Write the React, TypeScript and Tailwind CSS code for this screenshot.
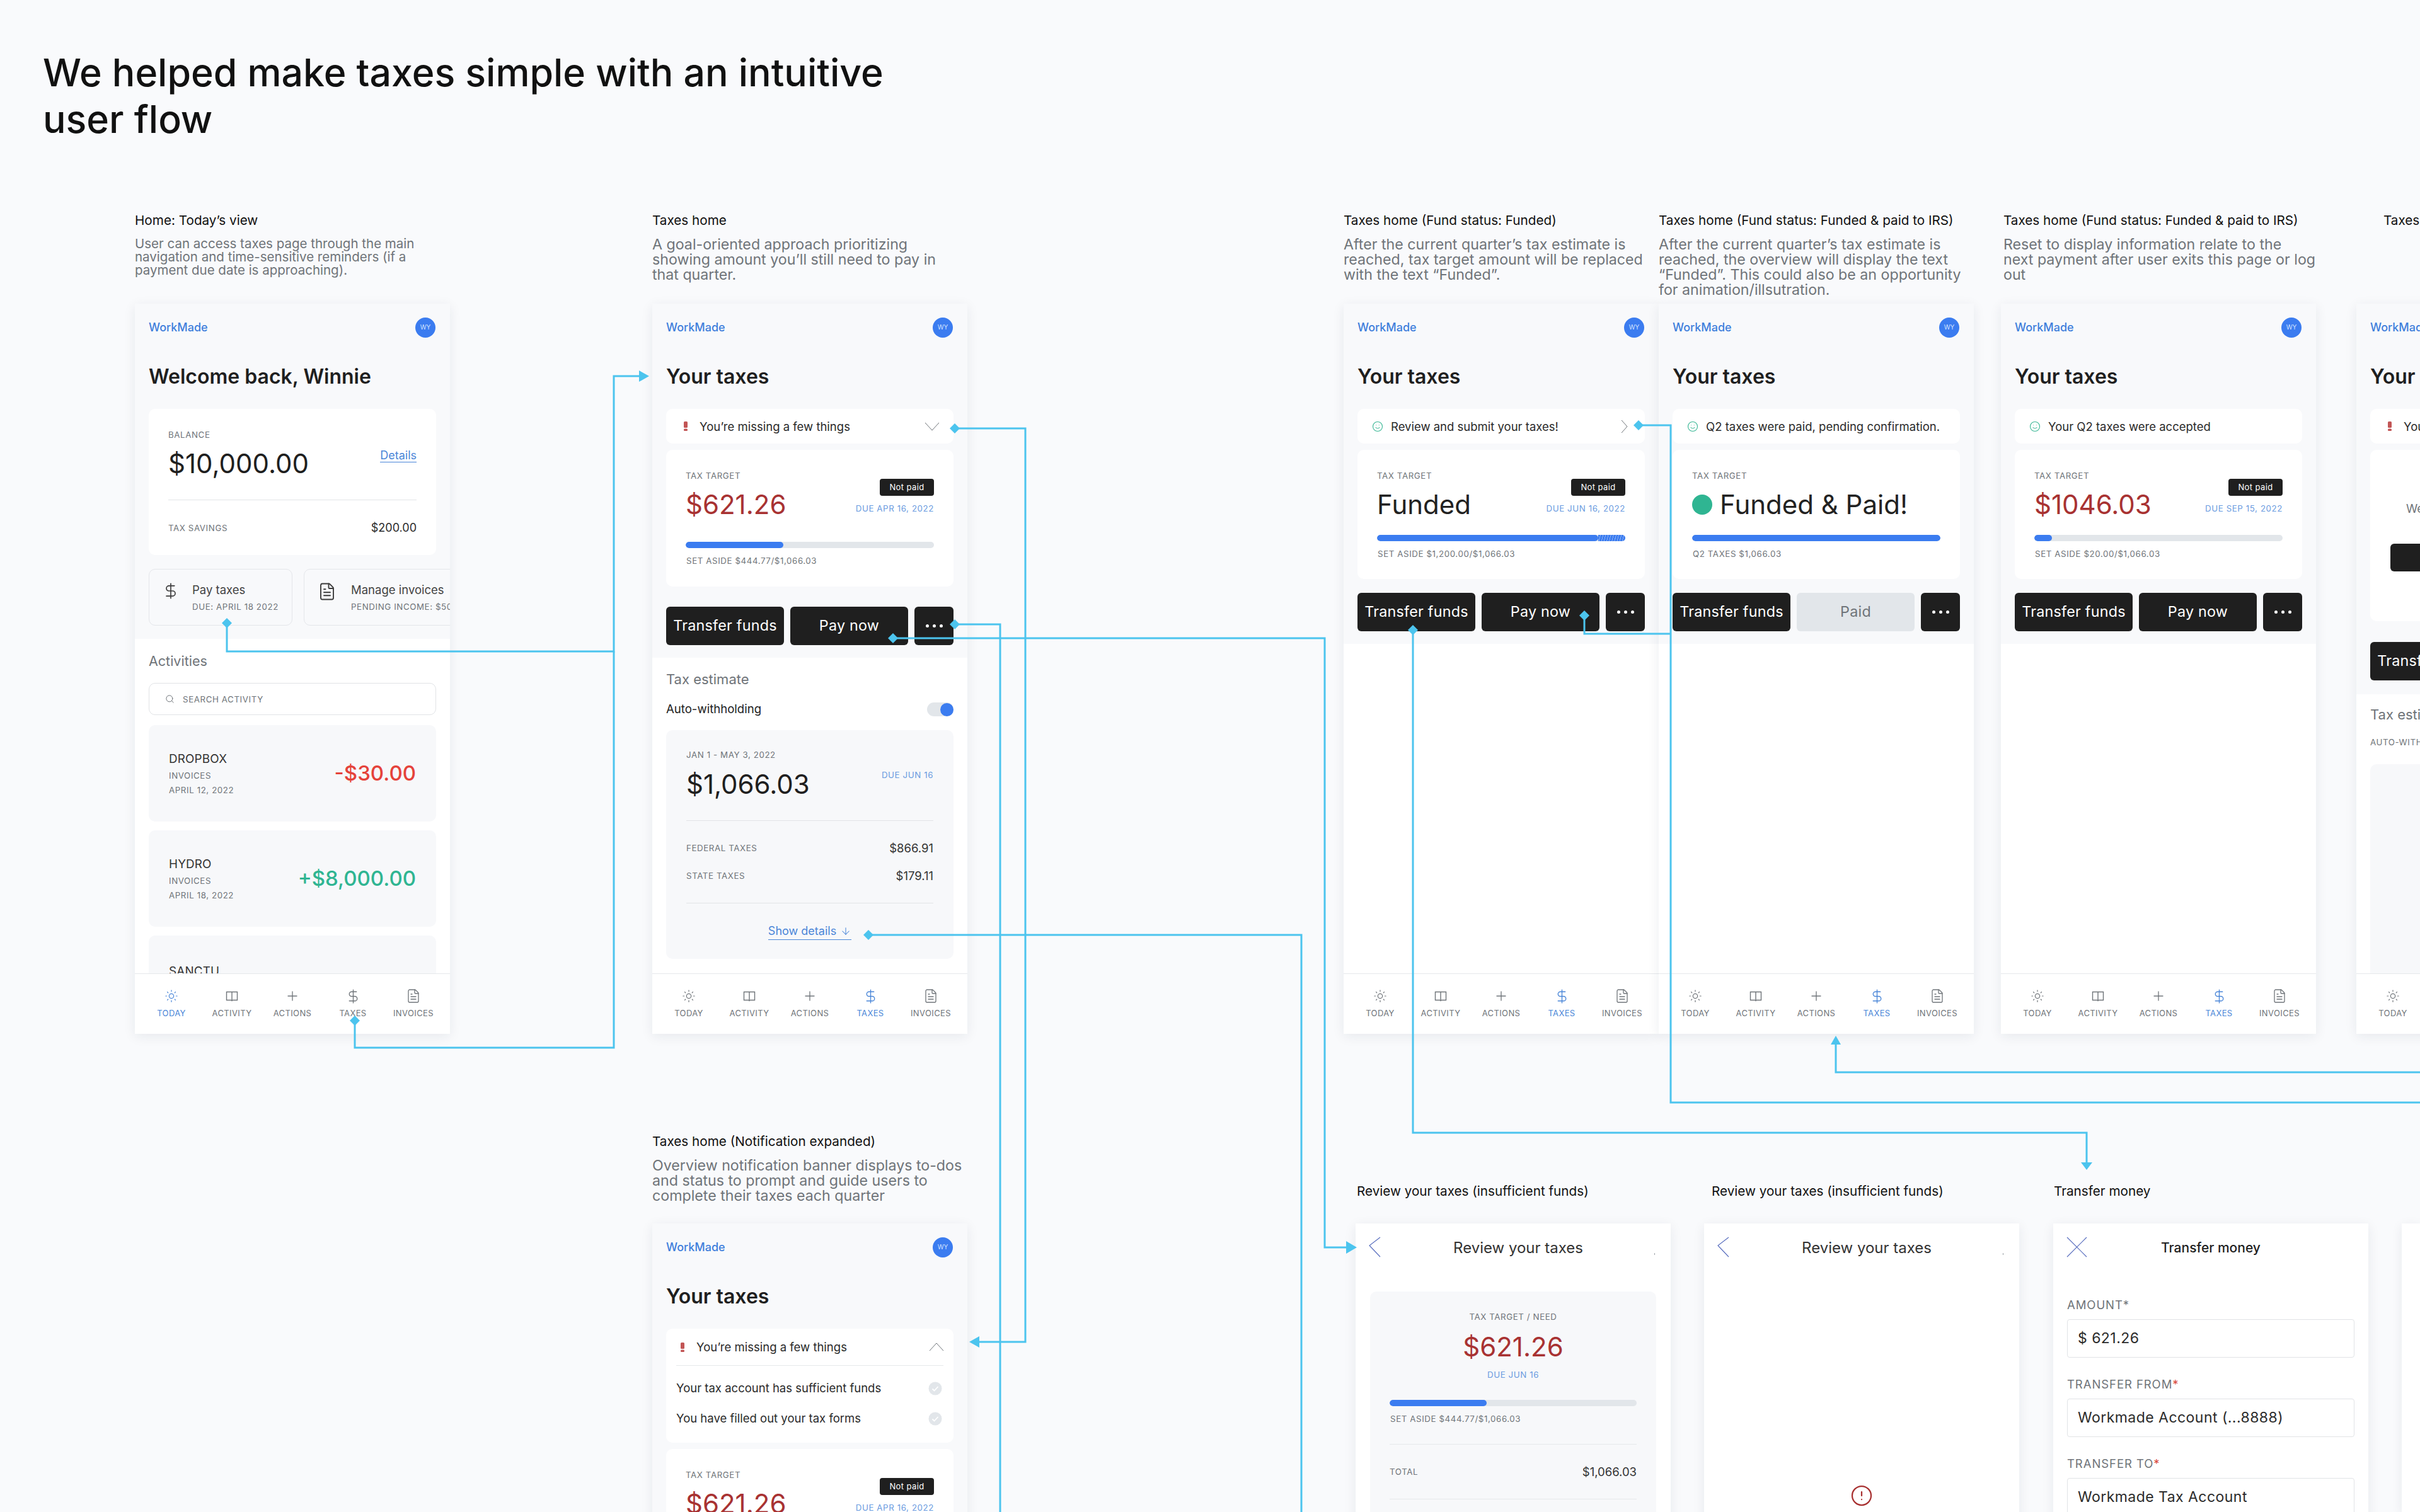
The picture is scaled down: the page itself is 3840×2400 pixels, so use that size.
import React from "react";
import { Sun, Plus, DollarSign, FileText, Search, Smile, AlertCircle, ArrowDown } from "lucide-react";

function BookIcon({ className }: { className?: string }) {
  return (
    <svg viewBox="0 0 24 24" width="24" height="24" fill="none" stroke="currentColor" strokeWidth="1.4" className={className}>
      <path d="M3.5 5.5h17v13h-7.5l-1 1-1-1H3.5z" />
      <path d="M12 5.5v13" />
    </svg>
  );
}

const NAV = ["TODAY", "ACTIVITY", "ACTIONS", "TAXES", "INVOICES"];

function Nav({ active }: { active: string }) {
  return (
    <div className="flex h-[96px] shrink-0 border-t border-[#e6e8eb] bg-white px-[10px] pt-[22px]">
      {NAV.map((n) => {
        const on = n === active;
        const tone = on ? "text-[#4a86d8]" : "text-[#6f7479]";
        return (
          <div key={n} className={`flex w-[96px] flex-col items-center ${tone}`}>
            <div className="flex h-[26px] items-center justify-center">
              {n === "TODAY" && <Sun size={22} strokeWidth={1.3} />}
              {n === "ACTIVITY" && <BookIcon />}
              {n === "ACTIONS" && <Plus size={24} strokeWidth={1.3} />}
              {n === "TAXES" && <DollarSign size={25} strokeWidth={1.3} />}
              {n === "INVOICES" && <FileText size={24} strokeWidth={1.3} />}
            </div>
            <div className="mt-[6px] text-[13px] leading-[16px] tracking-[0.03em]">{n}</div>
          </div>
        );
      })}
    </div>
  );
}

function Phone({ children, className = "" }: { children: React.ReactNode; className?: string }) {
  return (
    <div className={`flex h-[1159px] w-[500px] shrink-0 flex-col overflow-hidden shadow-[0_4px_18px_rgba(30,40,60,0.08)] ${className}`}>
      {children}
    </div>
  );
}

function Header({ title }: { title: string }) {
  return (
    <>
      <div className="flex items-center justify-between pr-[1px] pt-[21px]">
        <div className="pt-[1px] text-[18px] font-medium leading-[32px] text-[#3f7fdc]">WorkMade</div>
        <div className="flex h-[32px] w-[32px] items-center justify-center rounded-full bg-[#3b7cf0] text-[10px] text-[#cfe0ff]">WY</div>
      </div>
      <h2 className="mt-[42px] text-[32px] font-semibold leading-[40px] text-[#1f1f1f]">{title}</h2>
    </>
  );
}

function Caps({ children, className = "", blue }: { children: React.ReactNode; className?: string; blue?: boolean }) {
  return <div className={`text-[13.3px] leading-[16px] tracking-[0.045em] ${blue ? "text-[#6a9be0]" : "text-[#6f7479]"} ${className}`}>{children}</div>;
}

function Bang() {
  return (
    <svg width="6" height="15" viewBox="0 0 6 15" fill="#c25555">
      <rect x="0" y="0" width="6" height="10" rx="1.5" />
      <rect x="0" y="11.5" width="6" height="3.5" rx="1.5" />
    </svg>
  );
}

function Chevron({ dir, className = "" }: { dir: "down" | "up" | "right"; className?: string }) {
  if (dir === "right")
    return (
      <svg width="11" height="22" viewBox="0 0 11 22" fill="none" stroke="#6f7479" strokeWidth="1" className={className}>
        <path d="M1 1l9 10-9 10" />
      </svg>
    );
  return (
    <svg width="24" height="14" viewBox="0 0 24 14" fill="none" stroke="#6f7479" strokeWidth="1" className={className}>
      <path d={dir === "down" ? "M1 1l11 12L23 1" : "M1 13L12 1l11 12"} />
    </svg>
  );
}

function Banner({ icon, text, chevron }: { icon: "bang" | "smile"; text: string; chevron?: "down" | "right" }) {
  return (
    <div className="flex h-[55px] items-center rounded-[10px] bg-white pr-[22px]">
      <div className="flex w-[53px] items-center pl-[23px]">
        {icon === "bang" ? (
          <div className="pl-[5px]"><Bang /></div>
        ) : (
          <Smile size={18} strokeWidth={1.5} className="text-[#3ab795]" />
        )}
      </div>
      <div className="flex-1 whitespace-nowrap text-[18.5px] leading-[24px] text-[#2b2b2b]">{text}</div>
      {chevron === "down" && <Chevron dir="down" />}
      {chevron === "right" && <Chevron dir="right" className="mr-[5px]" />}
    </div>
  );
}

function Progress({ pct, stripe, label, className = "" }: { pct: number; stripe?: boolean; label: string; className?: string }) {
  return (
    <div className={className}>
      <div className="flex h-[10px] overflow-hidden rounded-full bg-[#e2e6ea]">
        <div className="h-full rounded-full bg-[#3b7cf0]" style={{ width: `${pct}%` }} />
        {stripe && (
          <div className="h-full flex-1 bg-[repeating-linear-gradient(105deg,#3b7cf0_0,#3b7cf0_3px,#86aef4_3px,#86aef4_4px)]" />
        )}
      </div>
      <Caps className="mt-[12px] pl-[1px]">{label}</Caps>
    </div>
  );
}

function Target({
  amount,
  amountClass = "text-[#a83232]",
  dot,
  badge = true,
  due,
  pct,
  stripe,
  note,
  compact,
}: {
  amount: string;
  amountClass?: string;
  dot?: boolean;
  badge?: boolean;
  due?: string;
  pct: number;
  stripe?: boolean;
  note: string;
  compact?: boolean;
}) {
  return (
    <div className={`mt-[10px] rounded-[10px] bg-white px-[31px] pt-[33px] ${compact ? "pb-[32px]" : "pb-[33px]"}`}>
      <div className="flex items-start justify-between">
        <div>
          <Caps>TAX TARGET</Caps>
          <div className={`mt-[13px] flex items-center text-[42px] leading-[50px] ${amountClass}`}>
            {dot && <span className="mr-[12px] h-[32px] w-[32px] rounded-full bg-[#2fb592]" />}
            {amount}
          </div>
        </div>
        {badge && (
          <div className="flex flex-col items-end pt-[13px]">
            <div className="flex h-[27px] w-[86px] items-center justify-center rounded-[4px] bg-[#1f1f1f] text-[13px] tracking-[0.03em] text-white">Not paid</div>
            <Caps blue className="mt-[12px]">{due}</Caps>
          </div>
        )}
      </div>
      <Progress pct={pct} stripe={stripe} label={note} className={compact ? "mt-[23px]" : "mt-[34px]"} />
    </div>
  );
}

function Buttons({ paid, compact }: { paid?: boolean; compact?: boolean }) {
  const dark = "flex h-[61px] items-center justify-center rounded-[6px] bg-[#1f1f1f] text-[23.3px] tracking-[0.01em] text-white";
  return (
    <div className={`flex gap-[10px] ${compact ? "mt-[22px]" : "mt-[32px]"}`}>
      <div className={`${dark} w-[187px]`}>Transfer funds</div>
      <div className={`flex h-[61px] w-[187px] items-center justify-center rounded-[6px] text-[23.3px] tracking-[0.01em] ${paid ? "bg-[#e2e6ea] text-[#6f7479]" : "bg-[#1f1f1f] text-white"}`}>
        {paid ? "Paid" : "Pay now"}
      </div>
      <div className={`${dark} flex-1 gap-[6px]`}>
        <span className="h-[5px] w-[5px] rounded-full bg-white" />
        <span className="h-[5px] w-[5px] rounded-full bg-white" />
        <span className="h-[5px] w-[5px] rounded-full bg-white" />
      </div>
    </div>
  );
}

function Label({ title, lines, h, tight, x }: { title: string; lines?: string[]; h: string; tight?: boolean; x?: string }) {
  return (
    <div className={`${h} ${x ?? ""} shrink-0`}>
      <div className="whitespace-nowrap text-[20.7px] leading-[24px] text-[#111]">{title}</div>
      {lines && (
        <div className={`mt-[14px] whitespace-nowrap text-[#6f7479] ${tight ? "text-[20.5px] leading-[21px]" : "text-[23.2px] leading-[24px]"}`}>
          {lines.map((l) => (
            <div key={l}>{l}</div>
          ))}
        </div>
      )}
    </div>
  );
}

function Activity({ name, date, amount, tone, shift }: { name: string; date: string; amount: string; tone: string; shift?: boolean }) {
  return (
    <div className={`flex h-[153px] shrink-0 items-center justify-between rounded-[10px] bg-[#f7f8fa] px-[32px] ${shift ? "pt-[6px]" : ""}`}>
      <div>
        <div className="text-[18.8px] leading-[24px] tracking-[0.01em] text-[#333]">{name}</div>
        <Caps className="mt-[6px]">INVOICES</Caps>
        <Caps className="mt-[7px]">{date}</Caps>
      </div>
      <div className={`text-[33px] font-medium ${tone}`}>{amount}</div>
    </div>
  );
}

function HomeScreen() {
  return (
    <Phone>
      <div className="bg-[#f8f9fb] px-[22px] pb-[21px]">
        <Header title="Welcome back, Winnie" />
        <div className="mt-[31px] rounded-[10px] bg-white px-[31px] pb-[31px] pt-[33px]">
          <Caps>BALANCE</Caps>
          <div className="mt-[13px] flex items-start justify-between">
            <div className="text-[42px] leading-[50px] text-[#1f1f1f]">$10,000.00</div>
            <div className="mt-[1px] border-b border-[#4a86d8] text-[18px] leading-[21px] text-[#4a86d8]">Details</div>
          </div>
          <div className="mt-[32px] h-[1px] bg-[#e2e4e7]" />
          <div className="mt-[32px] flex items-center justify-between">
            <Caps>TAX SAVINGS</Caps>
            <div className="text-[18px] leading-[24px] text-[#2b2b2b]">$200.00</div>
          </div>
        </div>
        <div className="mt-[22px] flex gap-[18px]">
          <div className="flex h-[90px] w-[228px] shrink-0 rounded-[10px] border border-[#e4e6ea] pt-[20px]">
            <div className="w-[68px] pl-[20px]"><DollarSign size={28} strokeWidth={1.4} className="text-[#3a3a3a]" /></div>
            <div>
              <div className="text-[18.5px] leading-[24px] text-[#444]">Pay taxes</div>
              <Caps className="mt-[7px] whitespace-nowrap">DUE: APRIL 18 2022</Caps>
            </div>
          </div>
          <div className="flex h-[90px] w-[300px] shrink-0 rounded-[10px] border border-[#e4e6ea] pt-[20px]">
            <div className="w-[74px] pl-[21px]"><FileText size={30} strokeWidth={1.5} className="text-[#3a3a3a]" /></div>
            <div>
              <div className="whitespace-nowrap text-[18.5px] leading-[24px] text-[#444]">Manage invoices</div>
              <Caps className="mt-[7px] whitespace-nowrap">PENDING INCOME: $500.00</Caps>
            </div>
          </div>
        </div>
      </div>
      <div className="min-h-0 flex-1 overflow-hidden bg-white px-[22px] pt-[21px]">
        <div className="text-[21.5px] leading-[28px] text-[#6f7479]">Activities</div>
        <div className="mt-[21px] flex h-[51px] items-center rounded-[10px] border border-[#e1e3e6] pl-[25px]">
          <Search size={15} strokeWidth={1.6} className="text-[#6f7479]" />
          <Caps className="ml-[13px]">SEARCH ACTIVITY</Caps>
        </div>
        <div className="mt-[16px] flex flex-col gap-[14px]">
          <Activity name="DROPBOX" date="APRIL 12, 2022" amount="-$30.00" tone="text-[#e5423a]" />
          <Activity name="HYDRO" date="APRIL 18, 2022" amount="+$8,000.00" tone="text-[#2fb592]" />
          <Activity shift name="SANCTU" date="APRIL 18, 2022" amount="" tone="" />
        </div>
      </div>
      <Nav active="TODAY" />
    </Phone>
  );
}

function Estimate() {
  return (
    <div className="mt-[21px] h-[363px] rounded-[10px] bg-[#f7f8fa] px-[32px] pt-[31px]">
      <Caps>JAN 1 - MAY 3, 2022</Caps>
      <div className="mt-[14px] flex items-start justify-between">
        <div className="text-[42px] leading-[50px] text-[#1f1f1f]">$1,066.03</div>
        <Caps blue className="mt-[2px]">DUE JUN 16</Caps>
      </div>
      <div className="mt-[32px] h-[1px] bg-[#e2e4e7]" />
      <div className="mt-[31px] flex items-center justify-between">
        <Caps>FEDERAL TAXES</Caps>
        <div className="text-[18.5px] leading-[24px] text-[#333]">$866.91</div>
      </div>
      <div className="mt-[20px] flex items-center justify-between">
        <Caps>STATE TAXES</Caps>
        <div className="text-[18.5px] leading-[24px] text-[#333]">$179.11</div>
      </div>
      <div className="mt-[31px] h-[1px] bg-[#e2e4e7]" />
      <div className="mt-[32px] flex justify-center">
        <div className="flex items-center gap-[6px] border-b border-[#4a86d8] pb-[1px] text-[18px] leading-[24px] text-[#4a86d8]">
          Show details <ArrowDown size={18} strokeWidth={1.4} />
        </div>
      </div>
    </div>
  );
}

function TaxesHome() {
  return (
    <Phone>
      <div className="bg-[#f8f9fb] px-[22px] pb-[20px]">
        <Header title="Your taxes" />
        <div className="mt-[31px]">
          <Banner icon="bang" text="You’re missing a few things" chevron="down" />
        </div>
        <Target amount="$621.26" due="DUE APR 16, 2022" pct={39.3} note="SET ASIDE $444.77/$1,066.03" />
        <Buttons />
      </div>
      <div className="min-h-0 flex-1 overflow-hidden bg-white px-[22px] pt-[20px]">
        <div className="text-[22px] leading-[28px] text-[#6f7479]">Tax estimate</div>
        <div className="mt-[22px] flex h-[24px] items-center justify-between">
          <div className="text-[18.6px] text-[#222]">Auto-withholding</div>
          <div className="flex h-[22px] w-[42px] items-center justify-end rounded-full bg-[#e2e6ea]">
            <div className="h-[21px] w-[21px] rounded-full bg-[#3b7cf0]" />
          </div>
        </div>
        <Estimate />
      </div>
      <Nav active="TAXES" />
    </Phone>
  );
}

function Expanded() {
  const Row = ({ t }: { t: string }) => (
    <div className="flex h-[48px] items-center justify-between pl-[16px] pr-[18px]">
      <div className="text-[18.5px] text-[#2b2b2b]">{t}</div>
      <svg width="22" height="22" viewBox="0 0 22 22">
        <circle cx="11" cy="11" r="10.5" fill="#e2e6ea" />
        <path d="M6.5 11.5l3 3 6-6.5" fill="none" stroke="#fff" strokeWidth="1.8" />
      </svg>
    </div>
  );
  return (
    <Phone>
      <div className="bg-[#f8f9fb] px-[22px] pb-[21px]">
        <Header title="Your taxes" />
        <div className="mt-[31px] h-[181px] rounded-[10px] bg-white">
          <div className="flex h-[58px] items-center pl-[23px] pr-[15px]">
            <Bang />
            <div className="ml-[19px] flex-1 text-[18.5px] leading-[24px] text-[#2b2b2b]">You’re missing a few things</div>
            <Chevron dir="up" />
          </div>
          <div className="mx-[16px] h-[1px] bg-[#e6e8eb]" />
          <div className="mt-[12px]">
            <Row t="Your tax account has sufficient funds" />
            <Row t="You have filled out your tax forms" />
          </div>
        </div>
        <Target amount="$621.26" due="DUE APR 16, 2022" pct={39.3} note="SET ASIDE $444.77/$1,066.03" />
      </div>
    </Phone>
  );
}

function FundedShell({ banner, target, paid }: { banner: React.ReactNode; target: React.ReactNode; paid?: boolean }) {
  return (
    <Phone>
      <div className="bg-[#f8f9fb] px-[22px] pb-[20px]">
        <Header title="Your taxes" />
        <div className="mt-[31px]">{banner}</div>
        {target}
        <Buttons paid={paid} compact />
      </div>
      <div className="min-h-0 flex-1 bg-white" />
      <Nav active="TAXES" />
    </Phone>
  );
}

function Sixth() {
  return (
    <Phone>
      <div className="bg-[#f8f9fb] px-[22px] pb-[22px]">
        <Header title="Your taxes" />
        <div className="mt-[31px]">
          <Banner icon="bang" text="You’re missing a few things" chevron="down" />
        </div>
        <div className="mt-[10px] flex h-[272px] flex-col items-start rounded-[10px] bg-white px-[32px] pt-[81px]">
          <div className="ml-[25px] whitespace-nowrap text-[18.5px] leading-[24px] text-[#6f7479]">We need more information from you</div>
          <div className="mt-[44px] h-[44px] w-full rounded-[6px] bg-[#1f1f1f]" />
        </div>
        <div className="mt-[33px]"><div className="flex h-[61px] w-[187px] items-center justify-center rounded-[6px] bg-[#1f1f1f] text-[23.3px] tracking-[0.01em] text-white">Transfer funds</div></div>
      </div>
      <div className="min-h-0 flex-1 overflow-hidden bg-white px-[22px] pt-[18px]">
        <div className="text-[22px] leading-[28px] text-[#6f7479]">Tax estimate</div>
        <Caps className="mt-[22px]">AUTO-WITHHOLDING</Caps>
        <div className="mt-[27px] h-[400px] rounded-[10px] bg-[#f7f8fa]" />
      </div>
      <Nav active="TAXES" />
    </Phone>
  );
}

function ReviewHeader({ title, close }: { title: string; close?: boolean }) {
  return (
    <div className="relative flex h-[76px] shrink-0 items-center justify-center pt-[1px]">
      <div className="absolute left-[21px] top-[21px]">
        {close ? (
          <svg width="33" height="33" viewBox="0 0 33 33" fill="none" stroke="#5a6fbf" strokeWidth="1.2">
            <path d="M1 1l31 31M32 1L1 32" />
          </svg>
        ) : (
          <svg width="19" height="33" viewBox="0 0 19 33" fill="none" stroke="#5a6fbf" strokeWidth="1.2">
            <path d="M18 1L1 14l17 18" />
          </svg>
        )}
      </div>
      <div className={`${close ? "text-[21px] font-medium text-[#1f1f1f]" : "ml-[16px] text-[24px] text-[#333]"} whitespace-nowrap`}>{title}</div>
      {!close && <div className="absolute right-[25px] top-[47px] h-[3px] w-[1px] bg-[#9aa0a6]" />}
    </div>
  );
}

function ReviewA() {
  return (
    <Phone className="bg-white">
      <ReviewHeader title="Review your taxes" />
      <div className="px-[23px] pt-[32px]">
        <div className="h-[700px] rounded-[10px] bg-[#f7f8fa] px-[31px] pt-[32px]">
          <Caps className="text-center">TAX TARGET / NEED</Caps>
          <div className="mt-[15px] text-center text-[42px] leading-[50px] text-[#a83232]">$621.26</div>
          <Caps blue className="mt-[11px] text-center">DUE JUN 16</Caps>
          <div className="mt-[32px]">
            <Progress pct={39.3} label="SET ASIDE $444.77/$1,066.03" />
          </div>
          <div className="mt-[32px] h-[1px] bg-[#e6e8eb]" />
          <div className="mt-[31px] flex items-center justify-between">
            <Caps>TOTAL</Caps>
            <div className="text-[18.5px] leading-[24px] text-[#333]">$1,066.03</div>
          </div>
          <div className="mt-[31px] h-[1px] bg-[#e6e8eb]" />
        </div>
      </div>
    </Phone>
  );
}

function ReviewB() {
  return (
    <Phone className="bg-white">
      <ReviewHeader title="Review your taxes" />
      <div className="flex justify-center pt-[338px]">
        <AlertCircle size={36} strokeWidth={1.5} className="text-[#a83232]" />
      </div>
    </Phone>
  );
}

function Field({ label, star, value }: { label: string; star?: boolean; value: string }) {
  return (
    <div>
      <div className="text-[18.5px] leading-[20px] tracking-[0.05em] text-[#6f7479]">
        {label}
        <span className={star ? "text-[#d9483b]" : ""}>*</span>
      </div>
      <div className="mt-[13px] flex h-[61px] items-center rounded-[4px] border border-[#e1e3e6] pl-[16px] text-[23px] tracking-[0.02em] text-[#2b2b2b]">{value}</div>
    </div>
  );
}

function Transfer() {
  return (
    <Phone className="bg-white">
      <ReviewHeader title="Transfer money" close />
      <div className="flex flex-col gap-[32px] px-[22px] pt-[43px]">
        <Field label="AMOUNT" value="$ 621.26" />
        <Field label="TRANSFER FROM" star value="Workmade Account (...8888)" />
        <Field label="TRANSFER TO" star value="Workmade Tax Account" />
      </div>
    </Phone>
  );
}

const L = "#4cc4ee";

function Wires() {
  const paths = [
    "M360 989V1034H974V597H1020",
    "M974 1034V1663H563V1620",
    "M1515 680H1627V2130H1548",
    "M1515 991H1587V2400",
    "M1417 1013H2102V1980H2140",
    "M1378 1484H2065V2400",
    "M2242 1000V1798H3311V1845",
    "M2514 977V1006H2651",
    "M2600 675H2651V1750H3840",
    "M2913 1656V1702H3840",
  ];
  const diamonds = [
    [360, 989], [563, 1620], [1515, 680], [1515, 991], [1417, 1013], [1378, 1484], [2242, 1000], [2514, 977], [2600, 675],
  ];
  return (
    <svg className="pointer-events-none absolute left-0 top-0" width="3840" height="2400" fill="none">
      {paths.map((d) => (
        <path key={d} d={d} stroke={L} strokeWidth="3" />
      ))}
      {diamonds.map(([x, y]) => (
        <path key={`${x}-${y}`} d={`M${x - 8} ${y}L${x} ${y - 8}L${x + 8} ${y}L${x} ${y + 8}Z`} fill={L} />
      ))}
      <path d="M1014 588L1030 597L1014 606Z" fill={L} />
      <path d="M1554 2121L1538 2130L1554 2139Z" fill={L} />
      <path d="M2136 1970L2153 1980L2136 1990Z" fill={L} />
      <path d="M3302 1845L3311 1857L3320 1845Z" fill={L} />
      <path d="M2905 1658L2913 1644L2921 1658Z" fill={L} />
    </svg>
  );
}

export default function App() {
  return (
    <div className="relative h-[2400px] w-[3840px] overflow-hidden bg-[#f9fafc] font-['Inter',sans-serif]">
      <h1 className="absolute left-[68px] top-[78px] whitespace-nowrap text-[60.8px] font-medium leading-[74px] text-[#111]">
        We helped make taxes simple with an intuitive
        <br />
        user flow
      </h1>

      <div className="absolute left-[214px] top-[338px] flex flex-col">
        <Label h="h-[144px]" tight title="Home: Today’s view" lines={["User can access taxes page through the main", "navigation and time-sensitive reminders (if a", "payment due date is approaching)."]} />
        <HomeScreen />
      </div>

      <div className="absolute left-[1035px] top-[338px] flex flex-col">
        <Label h="h-[144px]" title="Taxes home" lines={["A goal-oriented approach prioritizing", "showing amount you’ll still need to pay in", "that quarter."]} />
        <TaxesHome />
      </div>

      <div className="absolute left-[1035px] top-[1800px] flex flex-col">
        <Label h="h-[142px]" title="Taxes home (Notification expanded)" lines={["Overview notification banner displays to-dos", "and status to prompt and guide users to", "complete their taxes each quarter"]} />
        <Expanded />
      </div>

      <div className="absolute left-[2132px] top-[338px] flex flex-col">
        <Label h="h-[144px]" title="Taxes home (Fund status: Funded)" lines={["After the current quarter’s tax estimate is", "reached, tax target amount will be replaced", "with the text “Funded”."]} />
        <FundedShell
          banner={<Banner icon="smile" text="Review and submit your taxes!" chevron="right" />}
          target={<Target compact amount="Funded" amountClass="text-[#222]" due="DUE JUN 16, 2022" pct={89} stripe note="SET ASIDE $1,200.00/$1,066.03" />}
        />
      </div>

      <div className="absolute left-[2632px] top-[338px] flex flex-col">
        <Label h="h-[144px]" title="Taxes home (Fund status: Funded & paid to IRS)" lines={["After the current quarter’s tax estimate is", "reached, the overview will display the text", "“Funded”. This could also be an opportunity", "for animation/illsutration."]} />
        <FundedShell
          paid
          banner={<Banner icon="smile" text="Q2 taxes were paid, pending confirmation." />}
          target={<Target compact dot badge={false} amount="Funded & Paid!" amountClass="text-[#222]" pct={100} note="Q2 TAXES $1,066.03" />}
        />
      </div>

      <div className="absolute left-[3175px] top-[338px] flex flex-col">
        <Label h="h-[144px]" x="pl-[4px]" title="Taxes home (Fund status: Funded & paid to IRS)" lines={["Reset to display information relate to the", "next payment after user exits this page or log", "out"]} />
        <FundedShell
          banner={<Banner icon="smile" text="Your Q2 taxes were accepted" />}
          target={<Target compact amount="$1046.03" due="DUE SEP 15, 2022" pct={7} note="SET ASIDE $20.00/$1,066.03" />}
        />
      </div>

      <div className="absolute left-[3739px] top-[338px] flex flex-col">
        <Label h="h-[144px]" x="pl-[43px]" title="Taxes home" />
        <Sixth />
      </div>

      <div className="absolute left-[2151px] top-[1879px] flex flex-col">
        <Label h="h-[63px]" x="pl-[2px]" title="Review your taxes (insufficient funds)" />
        <ReviewA />
      </div>
      <div className="absolute left-[2704px] top-[1879px] flex flex-col">
        <Label h="h-[63px]" x="pl-[12px]" title="Review your taxes (insufficient funds)" />
        <ReviewB />
      </div>
      <div className="absolute left-[3258px] top-[1879px] flex flex-col">
        <Label h="h-[63px]" x="pl-[1px]" title="Transfer money" />
        <Transfer />
      </div>
      <div className="absolute left-[3811px] top-[1942px] h-[458px] w-[29px] bg-white shadow-[0_4px_18px_rgba(30,40,60,0.08)]" />

      <Wires />
    </div>
  );
}
